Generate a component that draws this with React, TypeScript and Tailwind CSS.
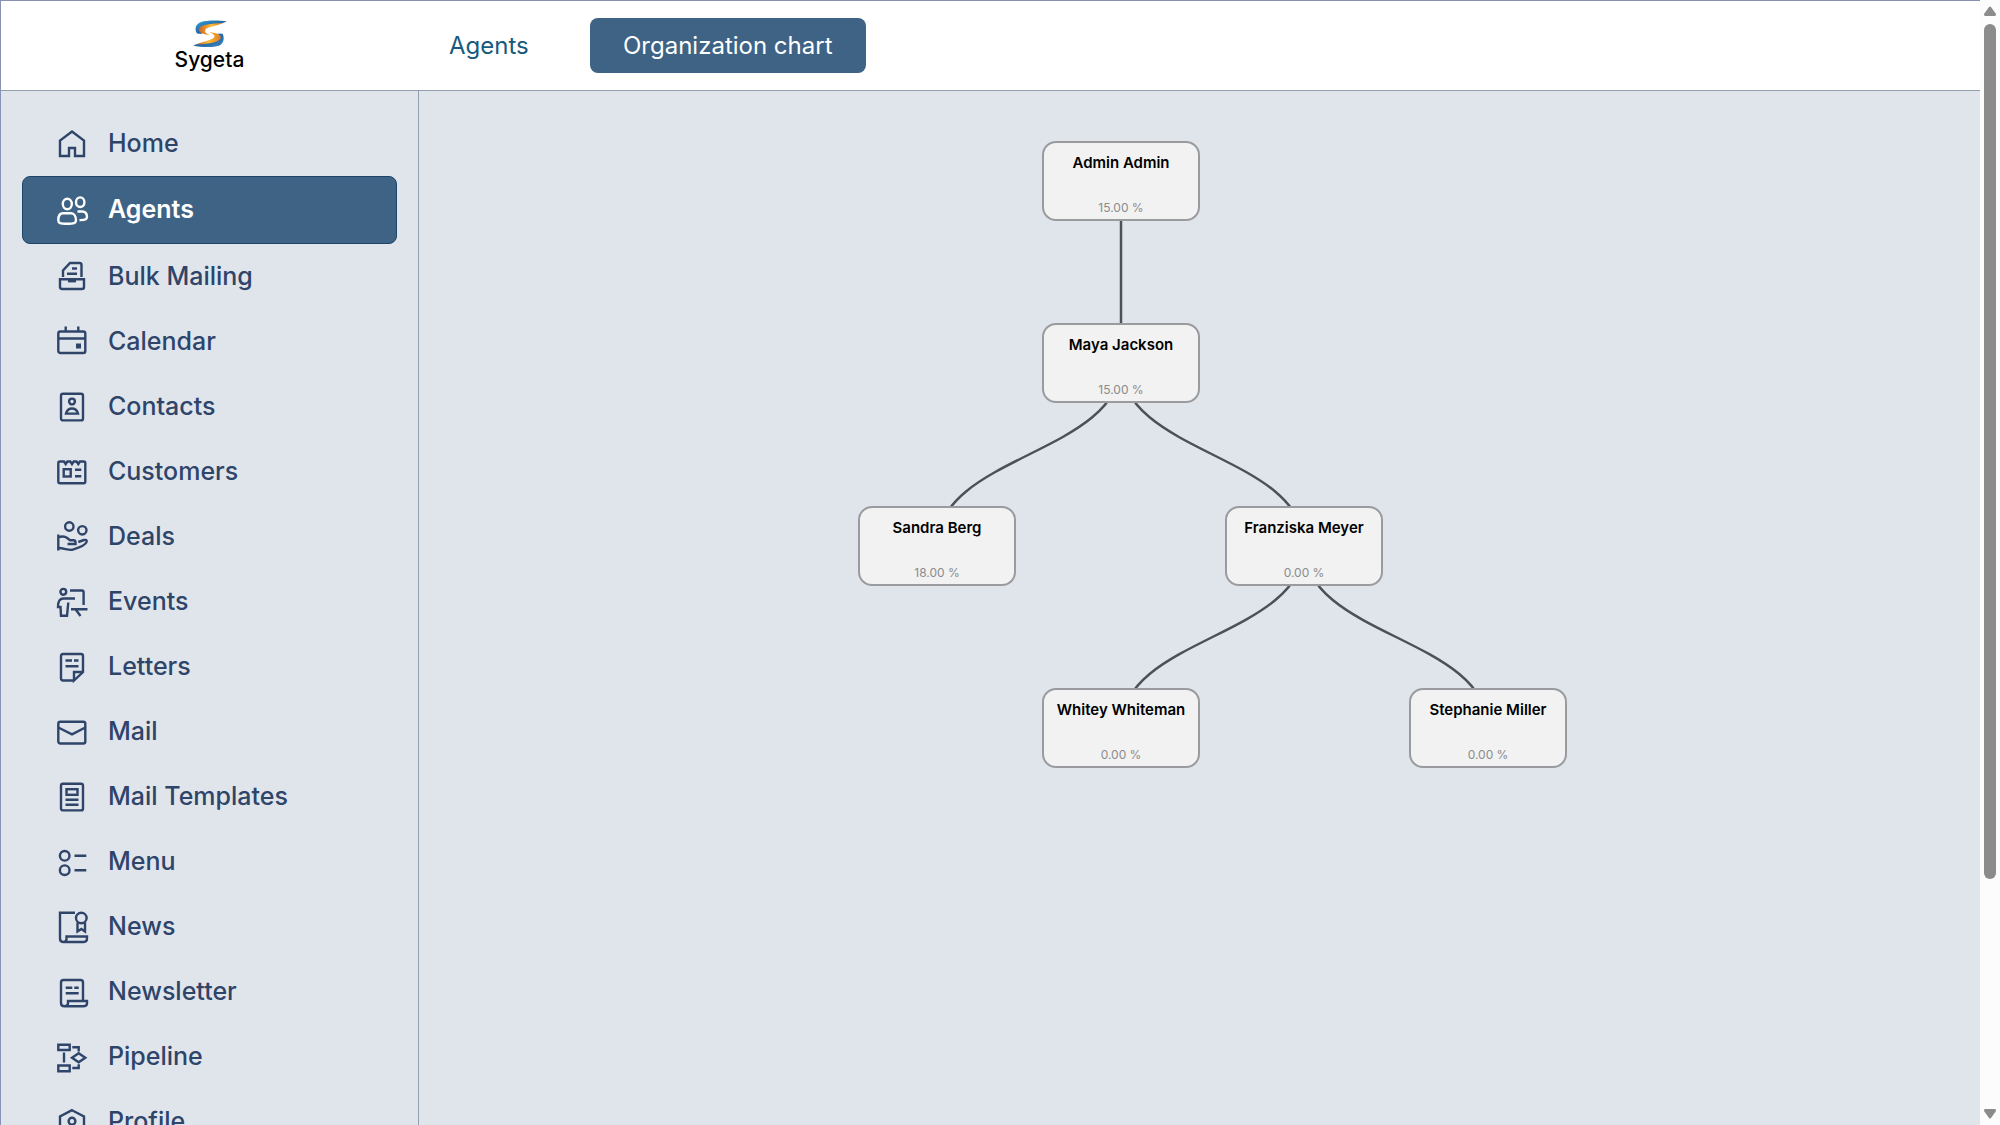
import React from "react";

type IconProps = { children: React.ReactNode };

function Icon({ children }: IconProps) {
  return (
    <svg
      viewBox="0 0 32 32"
      fill="none"
      stroke="currentColor"
      strokeWidth="2.4"
      className="w-8 h-8 shrink-0 overflow-visible"
      aria-hidden="true"
    >
      {children}
    </svg>
  );
}

const menu = [
  { l: "Home", icon: <path d="M4 28V12.5L16 3.5L28 12.5V28H19V20H13V28Z" /> },
  {
    l: "Agents",
    active: true,
    icon: (
      <>
        <ellipse cx="11.3" cy="10" rx="4.5" ry="5.2" />
        <ellipse cx="24.2" cy="8.2" rx="4.2" ry="4.8" />
        <path d="M7 19.3H15C18.5 19.3 20 23 20 26.3C20 29 18 29.8 11 29.8S2.3 29 2.3 26.3C2.3 23 3.5 19.3 7 19.3Z" />
        <path d="M21.5 17.5H26C29.5 17.5 31 20 31 23C31 25.5 29 25.6 23.5 26.2" />
      </>
    ),
  },
  {
    l: "Bulk Mailing",
    icon: (
      <>
        <path d="M7 16V9.5L14 2H23.5Q25.5 2 25.5 4V16M16 7.5H21M11 12.8H21" />
        <path d="M4 18.2H28V26Q28 28 26 28H6Q4 28 4 26Z" />
        <path d="M12 20.2H20" />
      </>
    ),
  },
  {
    l: "Calendar",
    icon: (
      <>
        <rect x="2.3" y="5.5" width="27" height="21.5" rx="2" />
        <path d="M2.3 12.5H29.3M9.7 0.5V6M22.3 0.5V6" />
        <path d="M20 17.5H25V22.5H20Z" fill="currentColor" stroke="none" />
      </>
    ),
  },
  {
    l: "Contacts",
    icon: (
      <>
        <rect x="5" y="2.8" width="22" height="26.6" rx="2" />
        <circle cx="16" cy="10.5" r="2.9" />
        <path d="M10 22.6C11 19 13 17.5 16 17.5S21 19 22 22.6Z" />
      </>
    ),
  },
  {
    l: "Customers",
    icon: (
      <>
        <path d="M4 5.5H8L9.7 8L11.4 5.5H14.3L16 8L17.7 5.5H20.6L22.3 8L24 5.5H27.6Q29.3 5.5 29.3 7V25.5Q29.3 27.3 27.6 27.3H4Q2.3 27.3 2.3 25.5V7Q2.3 5.5 4 5.5Z" />
        <rect x="7.7" y="13.2" width="7" height="7.3" />
        <path d="M19 13.8H25.3M19 20.2H25.3" />
      </>
    ),
  },
  {
    l: "Deals",
    icon: (
      <>
        <circle cx="13.3" cy="5.5" r="4.2" />
        <circle cx="26.3" cy="9.3" r="4.2" />
        <path d="M2.3 13.5V29.5M2.3 16.5C6 15 9 15.3 11.5 17.3L14 19.3H17.5Q19.5 19.3 19.5 21.3V23H11.5" />
        <path d="M22.3 21L28 19Q31 18.3 30.7 20.8C30 23.5 24 26.5 16 28.8C12 29.3 8 27 2.3 27" />
      </>
    ),
  },
  {
    l: "Events",
    icon: (
      <>
        <circle cx="7.3" cy="5.8" r="2.9" />
        <path d="M14 4.5H26Q27.6 4.5 27.6 6.5V19M15 23.2H31.5M19.5 23.2L24.5 30" />
        <path d="M19 12.5H7.5C3.5 12.5 2 15.5 2 21H4.5L5 29.8H11L12.3 16.5" />
      </>
    ),
  },
  {
    l: "Letters",
    icon: (
      <>
        <path d="M18 29.5H7Q5 29.5 5 27.5V5Q5 3 7 3H25Q27 3 27 5V21L18 29.5V21H27" />
        <path d="M9.5 9.5H16M18 9.5H22.5M9.5 15.2H22.5" />
      </>
    ),
  },
  {
    l: "Mail",
    icon: (
      <>
        <rect x="2.3" y="5.8" width="27" height="21.7" rx="2" />
        <path d="M2.3 11.5L16 18.3L29.3 11.5" />
      </>
    ),
  },
  {
    l: "Mail Templates",
    icon: (
      <>
        <rect x="5" y="2.8" width="22" height="26.6" rx="2" />
        <rect x="10.5" y="8.2" width="11" height="5.6" />
        <path d="M9.5 18.8H22.5M9.5 23.8H22.5" />
      </>
    ),
  },
  {
    l: "Menu",
    icon: (
      <>
        <circle cx="8.7" cy="9.8" r="4.8" />
        <circle cx="8.7" cy="24.2" r="4.8" />
        <path d="M18.5 9.8H30.3M18.5 24.2H30.3" />
      </>
    ),
  },
  {
    l: "News",
    icon: (
      <>
        <path d="M19 1.8H4V27.5Q4 31 7.5 31H27Q31 31 31 27.5V25.5H10.5V28Q10.5 31 7.5 31" />
        <circle cx="25.3" cy="7" r="5.3" />
        <path d="M21.5 11.5V20.5L25.3 18L29 20.5V11.5" />
      </>
    ),
  },
  {
    l: "Newsletter",
    icon: (
      <>
        <path d="M27 24.5V6.5Q27 4 24.5 4H7.5Q5 4 5 6.5V27Q5 30.3 8.5 30.3H27Q31 30.3 31 27.5V25H12V27Q12 30.3 8.5 30.3" />
        <path d="M9.7 11.8H16.3M18.3 11.8H22.7M9.7 17.2H22.7" />
      </>
    ),
  },
  {
    l: "Pipeline",
    icon: (
      <>
        <path d="M2.3 3.8H13.7V9H2.3ZM2.3 24.5H13.7V30.2H2.3ZM8 11.5V21.5" />
        <path d="M22.7 12.3L29.3 16.8L22.7 21.3L16 16.8ZM16.3 6.2H22.7V10.5M22.7 23.2V27H16.3" />
      </>
    ),
  },
  {
    l: "Profile",
    icon: (
      <>
        <path d="M16 4.2L28 10.5V28H4V10.5Z" />
        <circle cx="16" cy="15.2" r="3.4" />
      </>
    ),
  },
];

const NODE_W = 158;
const NODE_H = 80;

const people = [
  { id: "admin", name: "Admin Admin", rate: "15.00 %", x: 184, y: 0 },
  { id: "maya", name: "Maya Jackson", rate: "15.00 %", x: 184, y: 182, parent: "admin" },
  { id: "sandra", name: "Sandra Berg", rate: "18.00 %", x: 0, y: 365, parent: "maya" },
  { id: "franziska", name: "Franziska Meyer", rate: "0.00 %", x: 367, y: 365, parent: "maya" },
  { id: "whitey", name: "Whitey Whiteman", rate: "0.00 %", x: 184, y: 547, parent: "franziska" },
  { id: "stephanie", name: "Stephanie Miller", rate: "0.00 %", x: 551, y: 547, parent: "franziska" },
];

function Logo() {
  return (
    <a href="#" className="flex flex-col items-center text-black">
      <svg viewBox="0 0 34 28" className="w-[34px] h-7" aria-hidden="true">
        <defs>
          <linearGradient id="blue" x1="0" y1="0" x2="1" y2="1">
            <stop offset="0" stopColor="#2fa5e0" />
            <stop offset="0.5" stopColor="#2467a3" />
            <stop offset="1" stopColor="#3b86c4" />
          </linearGradient>
          <linearGradient id="orange" x1="0" y1="0" x2="1" y2="0">
            <stop offset="0" stopColor="#c9602b" />
            <stop offset="0.5" stopColor="#fdbb30" />
            <stop offset="1" stopColor="#dd7d2a" />
          </linearGradient>
        </defs>
        <path d="M34 1.5C26 0 14 0 8 2C2 4 1.5 10 4 13.5L9 14C7 9 10 6.5 16 5.5C24 4.5 30 3.5 34 1.5Z" fill="url(#blue)" />
        <path d="M30 3C18 3.5 9 4.5 6 8C4.500 12 9 14.500 17 15C12 12.800 11 11 13 9C15.500 6.800 23 6 30 3Z" fill="url(#orange)" />
        <path d="M0 25.5C8 27.5 20 27.5 26 25.8C31.5 23.5 31.5 17 29.5 13.8L25 13.5C27 17 24 20 18 21.5C10 23 4 23.5 0 25.5Z" fill="url(#blue)" />
        <path d="M3 24.500C14 24 24.500 23 27.300 19C29 15 25 13 16 12C20.500 14 22.500 15.500 21 17.500C18.500 20.200 10 21.500 3 24.500Z" fill="url(#orange)" />
      </svg>
      <span className="text-[21px] leading-6 font-medium">Sygeta</span>
    </a>
  );
}

function Header() {
  return (
    <header className="flex items-center h-[90px] shrink-0 bg-white border-b border-[#929fae]">
      <div className="w-[417px] shrink-0 flex justify-center">
        <Logo />
      </div>
      <nav className="flex items-center text-2xl">
        <a href="#" className="h-[55px] px-[31px] flex items-center text-[#175a7e]">Agents</a>
        <a
          href="#"
          className="ml-[30px] w-[276px] h-[55px] flex items-center justify-center rounded-lg bg-[#3e6385] text-white"
        >
          Organization chart
        </a>
      </nav>
    </header>
  );
}

function Sidebar() {
  return (
    <aside className="w-[418px] shrink-0 overflow-hidden border-r border-[#929fae] px-[21px] pt-5">
      <nav>
        <ul>
          {menu.map((m) => (
            <li key={m.l}>
              <a
                href="#"
                className={
                  m.active
                    ? "flex items-center gap-5 h-[68px] pl-[33px] rounded-lg border border-[#1d4469] bg-[#3e6385] text-white text-[25px] font-semibold"
                    : "flex items-center gap-5 h-[65px] pl-[34px] text-[#2e4469] text-[25px] font-medium"
                }
              >
                <Icon>{m.icon}</Icon>
                {m.l}
              </a>
            </li>
          ))}
        </ul>
      </nav>
    </aside>
  );
}

function OrgChart() {
  return (
    <div className="relative w-[709px] h-[627px] shrink-0">
      <svg viewBox="0 0 709 627" className="absolute inset-0 w-full h-full" fill="none" stroke="#4d5157" strokeWidth="2.5">
        {people.map((p) => {
          const parent = people.find((o) => o.id === p.parent);
          if (!parent) return null;
          const x1 = parent.x + NODE_W / 2;
          const y1 = parent.y + NODE_H / 2;
          const x2 = p.x + NODE_W / 2;
          const y2 = p.y + NODE_H / 2;
          const mid = (y1 + y2) / 2;
          return <path key={p.id} d={`M${x1} ${y1}C${x1} ${mid} ${x2} ${mid} ${x2} ${y2}`} />;
        })}
      </svg>
      {people.map((p) => (
        <div
          key={p.id}
          style={{ left: p.x, top: p.y, width: NODE_W, height: NODE_H }}
          className="absolute flex flex-col justify-between items-center pt-2.5 pb-[3px] rounded-[14px] border-2 border-[#999b9e] bg-[#f2f2f2] whitespace-nowrap"
        >
          <div className="text-[15px] leading-5 font-semibold text-black">{p.name}</div>
          <div className="text-xs leading-4 text-[#8b8b8b]">{p.rate}</div>
        </div>
      ))}
    </div>
  );
}

function Scrollbar() {
  return (
    <div className="w-5 shrink-0 bg-[#fcfcfc] flex flex-col items-center py-1.5" aria-hidden="true">
      <svg viewBox="0 0 12 10" className="w-3 h-2.5 mb-2 shrink-0" fill="#8b8b8b">
        <path d="M5 1Q6 0 7 1L12 8Q12 10 11 10H1Q0 10 0 8Z" />
      </svg>
      <div className="w-3 basis-0 grow-[855] rounded-full bg-[#8b8b8b]" />
      <div className="basis-0 grow-[222]" />
      <svg viewBox="0 0 12 10" className="w-3 h-2.5 mt-2 shrink-0" fill="#8b8b8b">
        <path d="M5 9Q6 10 7 9L12 2Q12 0 11 0H1Q0 0 0 2Z" />
      </svg>
    </div>
  );
}

export default function App() {
  return (
    <div className="h-screen flex overflow-hidden bg-[#e0e5ec] font-[Inter,'Liberation_Sans',sans-serif]">
      <div className="flex-1 min-w-0 flex flex-col border-t border-l border-[#8792b5]">
        <Header />
        <div className="flex-1 min-h-0 flex">
          <Sidebar />
          <main className="flex-1 min-w-0 overflow-hidden flex justify-center items-start pt-[50px] pl-[26px]">
            <OrgChart />
          </main>
        </div>
      </div>
      <Scrollbar />
    </div>
  );
}
